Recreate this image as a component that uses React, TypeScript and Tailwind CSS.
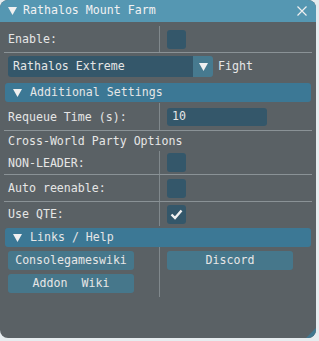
const font = { fontFamily: '"DejaVu Sans Mono", "Liberation Mono", monospace' };

function Tri({ className = '' }: { className?: string }) {
	return (
		<svg width="9" height="8" viewBox="0 0 9 8" className={className}>
			<path d="M0 0 H9 L4.5 8 Z" fill="#f0f0f0" />
		</svg>
	);
}

function Box({ checked = false }: { checked?: boolean }) {
	return (
		<div className="w-[19px] h-[19px] rounded-[3px] bg-[#34576a] flex items-center justify-center">
			{checked && (
				<svg width="13" height="11" viewBox="0 0 13 11">
					<path d="M1.5 5.5 L5 9 L11.5 1.5" stroke="#f2f2f2" strokeWidth="2.4" fill="none" />
				</svg>
			)}
		</div>
	);
}

function Row({ label, h, children }: { label: string; h: string; children?: React.ReactNode }) {
	return (
		<div className={`flex ${h}`}>
			<div className="w-[152px] border-r border-[#80888c] flex items-center pt-[2px]">{label}</div>
			<div className="pl-[7px] flex items-center">{children}</div>
		</div>
	);
}

function Line() {
	return <div className="-mx-[4px] h-px bg-[#8a9296]" />;
}

function Header({ title }: { title: string }) {
	return (
		<div className="-mx-[3px] h-[19px] rounded-[3px] bg-[#3c7895] flex items-center pl-[8px]">
			<Tri />
			<span className="ml-[8px]">{title}</span>
		</div>
	);
}

function Btn({ label }: { label: string }) {
	return (
		<div className="w-[126px] h-[19px] rounded-[3px] bg-[#46778b] flex items-center justify-center whitespace-pre">
			{label}
		</div>
	);
}

export default function App() {
	return (
		<div className="w-[319px] h-[341px] bg-[#e6ecef]" style={font}>
			<div className="relative w-[316px] h-[338px] rounded-[8px] overflow-hidden bg-[#5a6165] text-[#e6e6e6] text-[11.6px] flex flex-col">
				<div className="h-[22px] bg-[#5597b2] flex items-center pl-[8px] pr-[6px] text-[#f2f2f2]">
					<Tri />
					<span className="ml-[6px]">Rathalos Mount Farm</span>
					<svg width="10" height="10" viewBox="0 0 10 10" className="ml-auto mr-[3px]">
						<path d="M0.5 0.5 L9.5 9.5 M9.5 0.5 L0.5 9.5" stroke="#f0f0f0" strokeWidth="1.2" />
					</svg>
				</div>
				<div className="px-[8px] flex flex-col">
					<div className="mt-[4px]">
						<Row label="Enable:" h="h-[26px]"><Box /></Row>
					</div>
					<Line />
					<div className="mt-[3px] flex items-center h-[21px]">
						<div className="w-[185px] h-full rounded-l-[3px] bg-[#34576a] flex items-center pl-[5px]">Rathalos Extreme</div>
						<div className="w-[20px] h-full rounded-r-[3px] bg-[#477a8f] flex items-center justify-center"><Tri /></div>
						<span className="ml-[5px]">Fight</span>
					</div>
					<div className="mt-[6px]"><Header title="Additional Settings" /></div>
					<div className="mt-[1px]">
						<Row label="Requeue Time (s):" h="h-[27px]">
							<div className="w-[100px] h-[18px] rounded-[3px] bg-[#34576a] flex items-center pl-[5px]">10</div>
						</Row>
					</div>
					<Line />
					<div className="h-[20px] flex items-center pt-[2px]">Cross-World Party Options</div>
					<Row label="NON-LEADER:" h="h-[23px]"><Box /></Row>
					<Line />
					<Row label="Auto reenable:" h="h-[26px]"><Box /></Row>
					<Line />
					<Row label="Use QTE:" h="h-[24px]"><Box checked /></Row>
					<div className="mt-[2px]"><Header title="Links / Help" /></div>
					<div className="flex h-[50px]">
						<div className="w-[152px] border-r border-[#80888c] flex flex-col gap-[4px] pt-[4px]">
							<Btn label="Consolegameswiki" />
							<Btn label="Addon  Wiki" />
						</div>
						<div className="pl-[7px] pt-[4px]">
							<Btn label="Discord" />
						</div>
					</div>
				</div>
				<svg width="10" height="10" viewBox="0 0 10 10" className="absolute right-0 bottom-0">
					<path d="M10 0 V10 H0 Z" fill="#40778f" />
				</svg>
			</div>
		</div>
	);
}
